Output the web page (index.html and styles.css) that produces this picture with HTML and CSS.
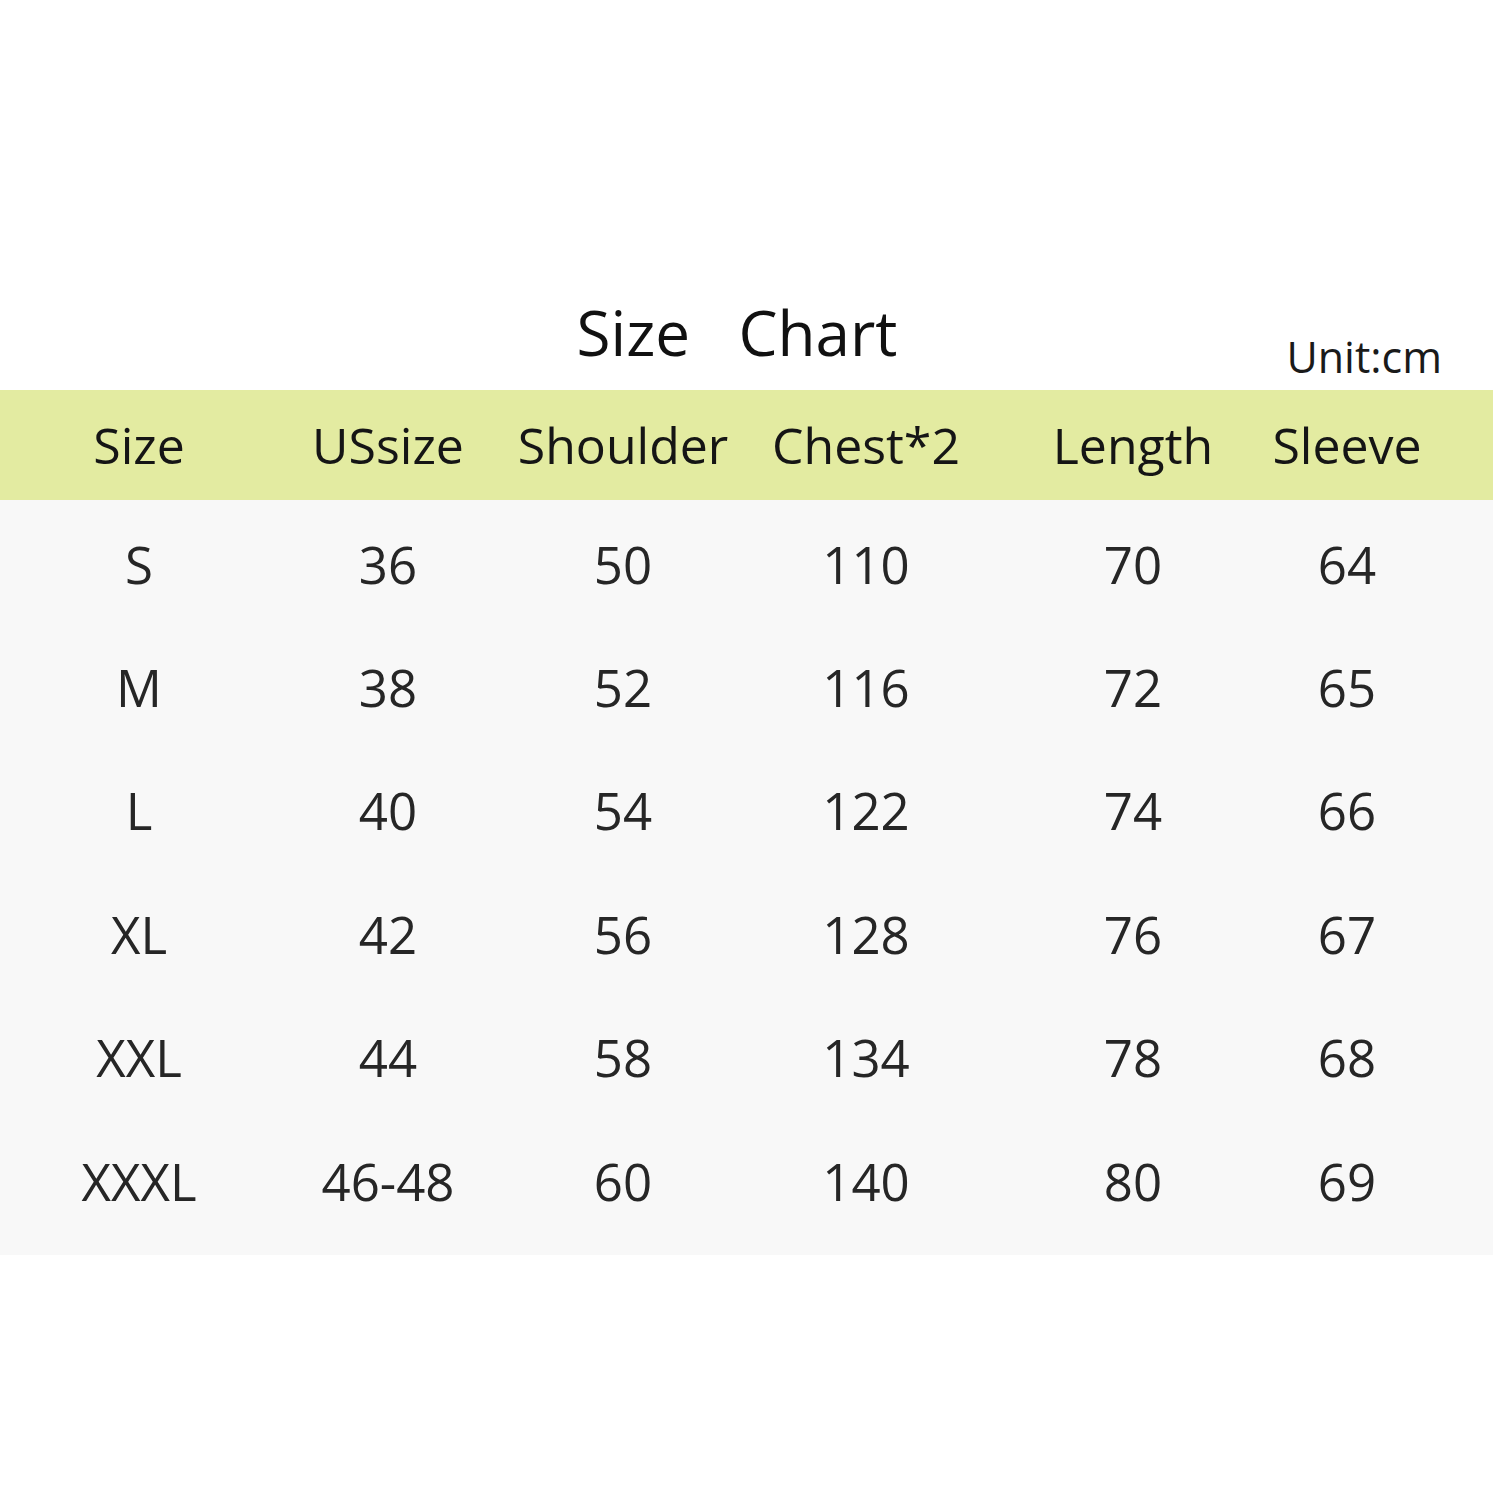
FILE: index.html
```html
<!DOCTYPE html>
<html>
<head>
<meta charset="utf-8">
<link rel="stylesheet" href="styles.css">
</head>
<body>
<div class="page">
  <div class="heading">
    <div class="title">Size&nbsp;&nbsp;&nbsp;Chart</div>
    <div class="unit">Unit:cm</div>
  </div>
  <div class="table">
    <div class="row head">
      <div class="cell">Size</div>
      <div class="cell">USsize</div>
      <div class="cell">Shoulder</div>
      <div class="cell">Chest*2</div>
      <div class="cell">Length</div>
      <div class="cell">Sleeve</div>
    </div>
    <div class="body">
      <div class="row"><div class="cell">S</div><div class="cell">36</div><div class="cell">50</div><div class="cell">110</div><div class="cell">70</div><div class="cell">64</div></div>
      <div class="row"><div class="cell">M</div><div class="cell">38</div><div class="cell">52</div><div class="cell">116</div><div class="cell">72</div><div class="cell">65</div></div>
      <div class="row"><div class="cell">L</div><div class="cell">40</div><div class="cell">54</div><div class="cell">122</div><div class="cell">74</div><div class="cell">66</div></div>
      <div class="row"><div class="cell">XL</div><div class="cell">42</div><div class="cell">56</div><div class="cell">128</div><div class="cell">76</div><div class="cell">67</div></div>
      <div class="row"><div class="cell">XXL</div><div class="cell">44</div><div class="cell">58</div><div class="cell">134</div><div class="cell">78</div><div class="cell">68</div></div>
      <div class="row"><div class="cell">XXXL</div><div class="cell">46-48</div><div class="cell">60</div><div class="cell">140</div><div class="cell">80</div><div class="cell">69</div></div>
    </div>
  </div>
</div>
</body>
</html>
```
FILE: styles.css
```css
html, body {
  margin: 0;
  padding: 0;
  background: #ffffff;
}
body {
  font-family: "Open Sans", "Noto Sans", sans-serif;
  color: #1c1c1c;
}
.page {
  width: 1493px;
}
.heading {
  height: 390px;
  box-sizing: border-box;
  padding-top: 290px;
  padding-right: 19px;
  display: grid;
  grid-template-columns: 1fr auto 1fr;
}
.title {
  grid-column: 2;
  font-size: 62px;
  line-height: 84px;
  height: 84px;
  color: #111;
}
.unit {
  grid-column: 3;
  justify-self: end;
  align-self: end;
  margin-right: 32px;
  padding-bottom: 8px;
  font-size: 43px;
  line-height: 50px;
  color: #1a1a1a;
}
.table {
  width: 1493px;
}
.row {
  display: grid;
  grid-template-columns: 278px 220px 250px 236px 298px 130px;
  height: 123.4px;
  align-items: center;
}
.cell {
  display: flex;
  justify-content: center;
  white-space: nowrap;
  font-size: 50px;
  line-height: 60px;
}
.head {
  height: 110px;
  background: #e3eba1;
  color: #151515;
}
.body {
  background: #f8f8f8;
  padding-top: 2px;
  padding-bottom: 13px;
  color: #262626;
}
.body .cell {
  font-size: 51px;
}
```
